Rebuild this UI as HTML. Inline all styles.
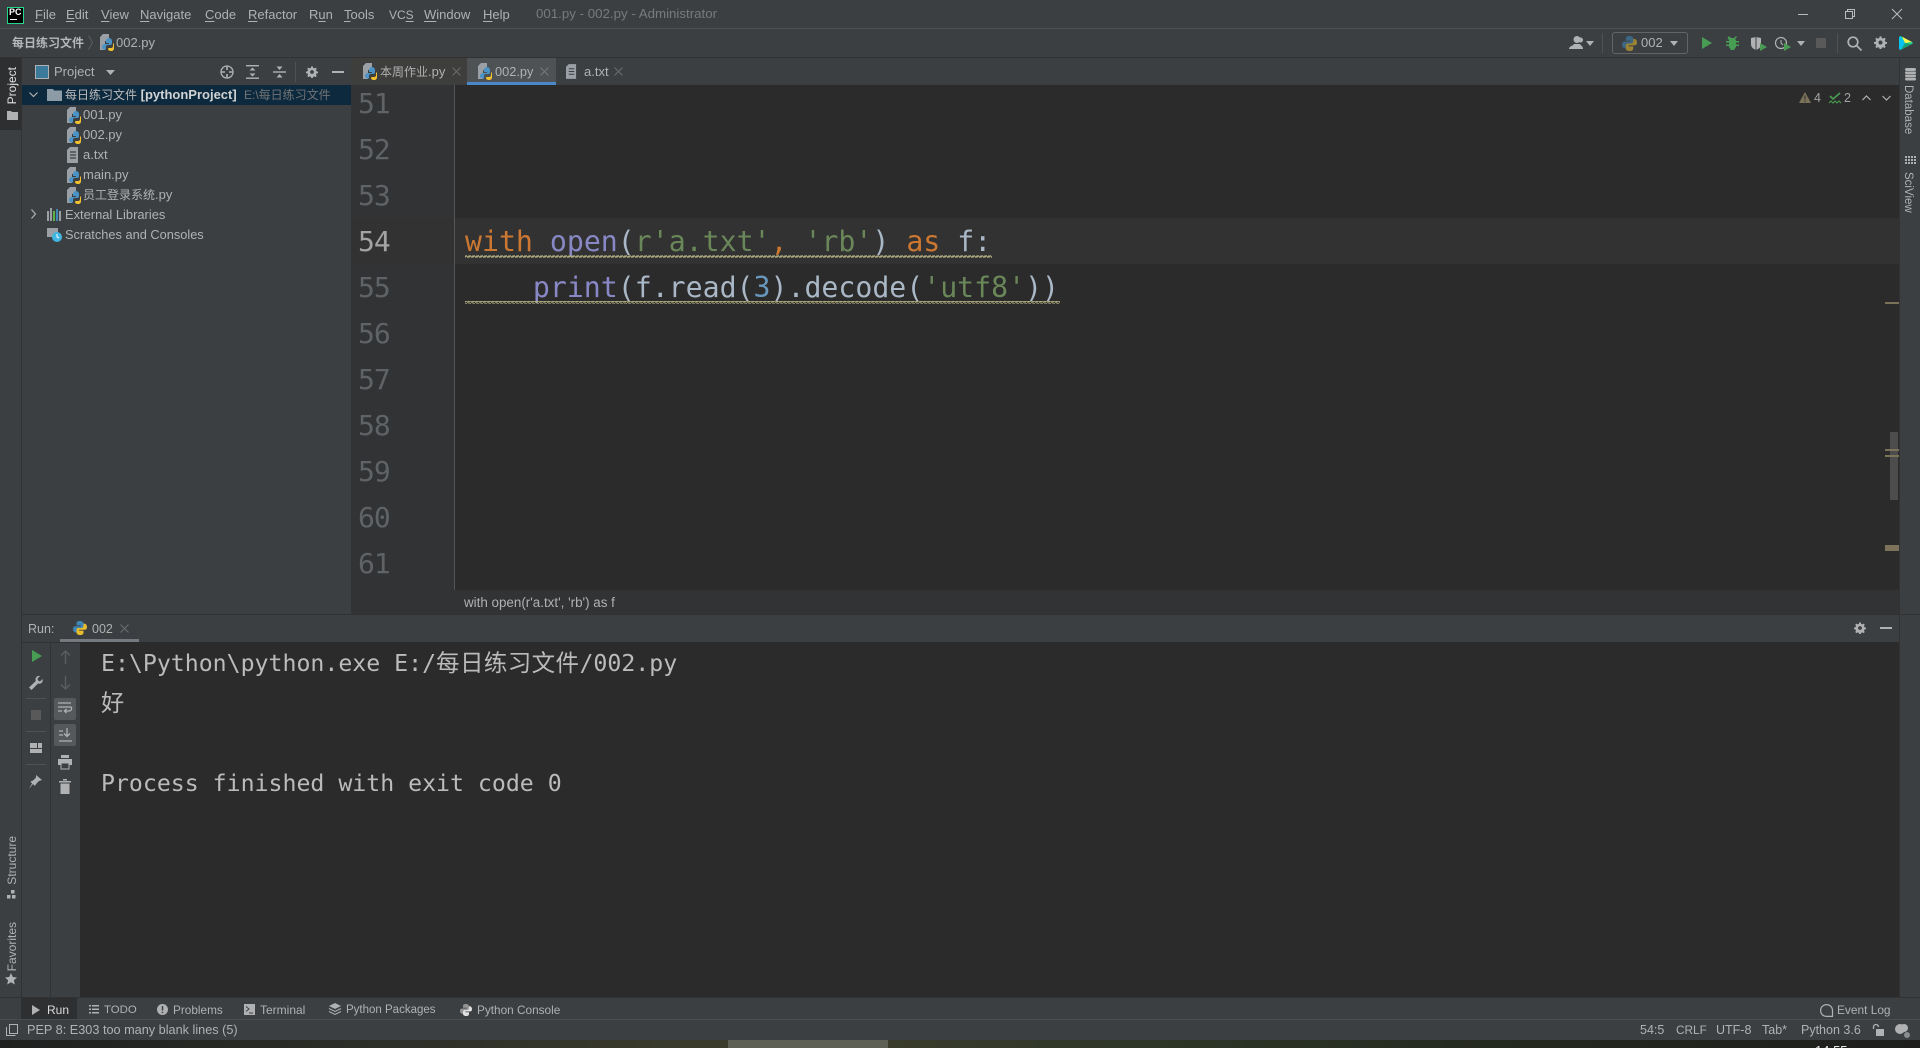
<!DOCTYPE html>
<html><head><meta charset="utf-8"><style>
html,body{margin:0;padding:0;width:1920px;height:1048px;overflow:hidden;background:#3c3f41}
body{position:relative;font:13px/20px "Liberation Sans","Noto Sans CJK SC",sans-serif;color:#afb1b3}
.b{position:absolute}
.t{position:absolute;white-space:nowrap;line-height:20px;font-size:13px;color:#afb1b3}
.c{font-size:12px}
.v{position:absolute;writing-mode:vertical-rl;white-space:nowrap;font-size:12px;line-height:14px;color:#afb1b3}
.l{transform:rotate(180deg)}
u{text-decoration:underline;text-underline-offset:2px}
.ln{position:absolute;left:358px;font:28px/46px "DejaVu Sans Mono",monospace;color:#606366;letter-spacing:-1px}
.code{position:absolute;left:465px;white-space:pre;font:28.2px/46px "DejaVu Sans Mono",monospace;color:#a9b7c6}
.k{color:#cc7832}.f{color:#8888c6}.s{color:#6a8759}.n{color:#6897bb}
.con{position:absolute;left:101px;white-space:pre;font:23.2px/40px "DejaVu Sans Mono","Noto Sans CJK SC",monospace;color:#bbbbbb}
svg.i{position:absolute;overflow:visible}
</style></head><body>
<svg width="0" height="0" style="position:absolute"><defs>
<symbol id="pyf" viewBox="0 0 14 17"><path d="M0 3l3-3h6v7H5v9H0z" fill="#9aa0a5"/><path d="M9 4a3 3 0 0 0-3 3v2h3v1H5a3 3 0 0 0-3 3 3 3 0 0 0 2 2.500h2v-2.500a2 2 0 0 1 2-2h2a2 2 0 0 0 2-2V7a3 3 0 0 0-3-3z" fill="#4a93c4"/><path d="M13 9v3a2 2 0 0 1-2 2H9a1 1 0 0 0-1 1v0c0 1 1 2 3 2s3-1 3-3v-3a2 2 0 0 0-1-2z" fill="#f2c12e"/></symbol>
<symbol id="py" viewBox="0 0 16 16"><path d="M8 0C5 0 4 1 4 3v2h5v1H3C1 6 0 7 0 9s1 4 3 4h1v-2c0-2 1-3 3-3h3c1 0 2-1 2-2V3c0-2-2-3-4-3z" fill="#3f86b8"/><path d="M8 16c3 0 4-1 4-3v-2H7v-1h6c2 0 3-1 3-3s-1-4-3-4h-1v2c0 2-1 3-3 3H6c-1 0-2 1-2 2v3c0 2 2 3 4 3z" fill="#e9bc2e"/></symbol>
<symbol id="txt" viewBox="0 0 12 16"><path d="M0 3l3-3h8v16H0z" fill="#9aa0a5"/><path d="M3 5h6M3 8h6M3 11h6" stroke="#3c3f41" stroke-width="1.200"/></symbol>
<symbol id="gear" viewBox="0 0 16 16"><path d="M7 .5h2l.5 2 1.600.7 1.800-1 1.400 1.400-1 1.800.7 1.600 2 .5v2l-2 .5-.7 1.600 1 1.800-1.400 1.400-1.800-1-1.600.7-.5 2H7l-.5-2-1.600-.7-1.800 1-1.400-1.400 1-1.800-.7-1.600-2-.5v-2l2-.5.7-1.600-1-1.800 1.400-1.400 1.800 1 1.600-.7zM8 5.500a2.500 2.500 0 1 0 0 5 2.500 2.500 0 0 0 0-5z" fill="#afb1b3" fill-rule="evenodd"/></symbol>
<linearGradient id="tb" x1="0" y1="0" x2="1" y2="1"><stop offset="0" stop-color="#fcf84a"/><stop offset=".5" stop-color="#3ddc84"/><stop offset="1" stop-color="#21d789"/></linearGradient>
</defs></svg>

<!-- main bars -->
<div class="b" style="left:0;top:28px;width:1920px;height:1px;background:#515151"></div>
<div class="b" style="left:0;top:57px;width:1920px;height:1px;background:#323232"></div>

<!-- logo -->
<div class="b" style="left:7px;top:7px;width:15px;height:15px;background:#000;border:1px solid #21d789"></div>
<div class="t" style="left:9px;top:5px;color:#fff;font-size:9px;font-weight:bold;line-height:14px">PC</div>
<div class="b" style="left:10px;top:19px;width:7px;height:1px;background:#fff"></div>

<!-- menu -->
<div class="t" style="left:35px;top:5px"><u>F</u>ile</div>
<div class="t" style="left:66px;top:5px"><u>E</u>dit</div>
<div class="t" style="left:101px;top:5px"><u>V</u>iew</div>
<div class="t" style="left:140px;top:5px"><u>N</u>avigate</div>
<div class="t" style="left:205px;top:5px"><u>C</u>ode</div>
<div class="t" style="left:248px;top:5px"><u>R</u>efactor</div>
<div class="t" style="left:309px;top:5px">R<u>u</u>n</div>
<div class="t" style="left:344px;top:5px"><u>T</u>ools</div>
<div class="t" style="left:389px;top:5px;font-size:12px">VC<u>S</u></div>
<div class="t" style="left:424px;top:5px"><u>W</u>indow</div>
<div class="t" style="left:483px;top:5px"><u>H</u>elp</div>
<div class="t" style="left:536px;top:4px;color:#787b7d;font-size:13.300px">001.py - 002.py - Administrator</div>

<!-- window buttons -->
<div class="b" style="left:1798px;top:14px;width:10px;height:1px;background:#bbb"></div>
<svg class="i" style="left:1845px;top:9px" width="10" height="10" fill="none" stroke="#bbb"><rect x=".5" y="2.500" width="7" height="7"/><path d="M2.500 2.500V.5h7v7h-2"/></svg>
<svg class="i" style="left:1892px;top:9px" width="10" height="10" fill="none" stroke="#bbb"><path d="M0 0l10 10M10 0L0 10"/></svg>

<!-- nav bar -->
<div class="t c" style="left:12px;top:33px;font-weight:bold;color:#b5b7b9">每日练习文件</div>
<svg class="i" style="left:88px;top:35px" width="6" height="16" fill="none" stroke="#5a5d5f"><path d="M.5 .5l4 7-4 7"/></svg>
<svg class="i" style="left:100px;top:34px" width="14" height="17"><use href="#pyf"/></svg>
<div class="t" style="left:116px;top:33px">002.py</div>

<!-- top-right toolbar -->
<svg class="i" style="left:1569px;top:36px" width="14" height="13" fill="#afb1b3"><circle cx="8" cy="3.500" r="3.500"/><circle cx="11.500" cy="4" r="2.500"/><path d="M0 13c0-3 4-3 5-5h6c1 2 3 2 3 5z"/></svg>
<svg class="i" style="left:1586px;top:41px" width="8" height="5" fill="#afb1b3"><path d="M0 0h8L4 5z"/></svg>
<div class="b" style="left:1602px;top:33px;width:1px;height:20px;background:#515151"></div>
<div class="b" style="left:1612px;top:32px;width:74px;height:20px;border:1px solid #646464;border-radius:3px"></div>
<svg class="i" style="left:1622px;top:36px;opacity:.55" width="15" height="15"><use href="#py"/></svg>
<div class="t" style="left:1641px;top:33px;font-size:13px">002</div>
<svg class="i" style="left:1670px;top:41px" width="8" height="5" fill="#afb1b3"><path d="M0 0h8L4 5z"/></svg>
<svg class="i" style="left:1702px;top:37px" width="10" height="12" fill="#499c54"><path d="M0 0l10 6-10 6z"/></svg>
<svg class="i" style="left:1726px;top:36px" width="13" height="14" fill="#499c54"><path d="M3 0l2 2h3l2-2 1 1-2 2 1 1v1h3v1.500h-3v2h3V10h-3v1l-2 3H5l-2-3v-1H0V8.500h3v-2H0V5h3V4L1.500 2z"/></svg>
<svg class="i" style="left:1751px;top:37px" width="16" height="14"><path d="M0 1l5-1 5 1v6c0 4-3 5-5 6-2-1-5-2-5-6z" fill="#afb1b3"/><path d="M5 0v13" stroke="#3c3f41"/><path d="M9 6l7 4-7 4z" fill="#499c54"/></svg>
<svg class="i" style="left:1775px;top:37px" width="16" height="14"><circle cx="6" cy="6" r="5.500" fill="none" stroke="#afb1b3" stroke-width="1.200"/><path d="M6 3v3l2 2" stroke="#afb1b3" fill="none"/><path d="M9 6l7 4-7 4z" fill="#499c54"/></svg>
<svg class="i" style="left:1797px;top:41px" width="8" height="5" fill="#afb1b3"><path d="M0 0h8L4 5z"/></svg>
<div class="b" style="left:1816px;top:38px;width:10px;height:10px;background:#595959"></div>
<div class="b" style="left:1837px;top:33px;width:1px;height:20px;background:#515151"></div>
<svg class="i" style="left:1847px;top:36px" width="15" height="15" fill="none" stroke="#afb1b3" stroke-width="1.700"><circle cx="6" cy="6" r="4.800"/><path d="M9.500 9.500l5 5"/></svg>
<svg class="i" style="left:1874px;top:36px" width="13" height="13" viewBox="0 0 16 16"><use href="#gear"/></svg>
<svg class="i" style="left:1899px;top:36px" width="14" height="14"><path d="M0 2Q0 0 2 0.300L13 6Q14.500 7 13 8L2 13.700Q0 14 0 12z" fill="#21d789"/><path d="M3 .8L13 6 6 7z" fill="#fcf84a"/><path d="M0 2Q0 .2 2 .3L6 7 2 13.700Q0 14 0 12z" fill="#07c3f2"/><path d="M2 13.700L6 7 13 8z" fill="#19a07a"/></svg>

<!-- left stripe -->
<div class="b" style="left:0;top:58px;width:21px;height:72px;background:#2d2f30"></div>
<div class="b" style="left:21px;top:58px;width:1px;height:939px;background:#323232"></div>
<div class="v l" style="left:5px;top:67px;color:#e0e0e0">Project</div>
<svg class="i" style="left:7px;top:111px" width="11" height="9" fill="#afb1b3"><path d="M0 0h4l1 1h6v8H0z"/></svg>
<div class="v l" style="left:5px;top:836px">Structure</div>
<svg class="i" style="left:7px;top:890px" width="9" height="9" fill="#afb1b3"><rect x="3" width="3.500" height="3.500" transform="translate(1 0)"/><rect y="5" width="3.500" height="3.500"/><rect x="5" y="5" width="3.500" height="3.500"/></svg>
<div class="v l" style="left:5px;top:922px">Favorites</div>
<svg class="i" style="left:5px;top:973px" width="12" height="12" fill="#afb1b3"><path d="M6 0l1.800 4 4.200.5-3.100 2.800.9 4.200L6 9.300 2.200 11.500l.9-4.200L0 4.500 4.200 4z"/></svg>

<!-- project header -->
<svg class="i" style="left:35px;top:65px" width="14" height="14"><rect x=".5" y=".5" width="13" height="13" fill="#3c7a9c" stroke="#afb1b3"/></svg>
<div class="t" style="left:54px;top:62px">Project</div>
<svg class="i" style="left:106px;top:70px" width="9" height="5" fill="#afb1b3"><path d="M0 0h9L4.500 5z"/></svg>
<svg class="i" style="left:220px;top:65px" width="14" height="14" fill="none" stroke="#afb1b3" stroke-width="1.300"><circle cx="7" cy="7" r="6"/><path d="M7 1v4M7 9v4M1 7h4M9 7h4" stroke-width="1.600"/></svg>
<svg class="i" style="left:246px;top:65px" width="13" height="14" fill="#afb1b3"><rect width="13" height="1.400"/><rect y="12.500" width="13" height="1.400"/><path d="M6.500 2.500l3 3h-6zM6.500 11.500l3-3h-6z"/></svg>
<svg class="i" style="left:273px;top:65px" width="13" height="14" fill="#afb1b3"><rect y="6.300" width="13" height="1.400"/><path d="M6.500 5l3-3.500h-6zM6.500 9l3 3.500h-6z"/></svg>
<div class="b" style="left:295px;top:62px;width:1px;height:20px;background:#515151"></div>
<svg class="i" style="left:306px;top:66px" width="12" height="12" viewBox="0 0 16 16"><use href="#gear"/></svg>
<div class="b" style="left:332px;top:71px;width:12px;height:1.500px;background:#afb1b3"></div>

<!-- tabs -->
<div class="b" style="left:351px;top:58px;width:116px;height:26px;background:#3e3e3c"></div>
<div class="b" style="left:467px;top:58px;width:89px;height:24px;background:#4e5254"></div>
<div class="b" style="left:467px;top:82px;width:89px;height:3px;background:#4a88c7"></div>
<svg class="i" style="left:363px;top:63px" width="14" height="17"><use href="#pyf"/></svg>
<div class="t" style="left:380px;top:62px"><span class="c">本周作业</span>.py</div>
<svg class="i" style="left:478px;top:63px" width="14" height="17"><use href="#pyf"/></svg>
<div class="t" style="left:495px;top:62px;font-size:12.800px">002.py</div>
<svg class="i" style="left:540px;top:67px" width="9" height="9" stroke="#77797b" fill="none"><path d="M.5 .5l8 8M8.500 .5l-8 8"/></svg>
<svg class="i" style="left:566px;top:64px" width="11" height="15"><use href="#txt"/></svg>
<div class="t" style="left:584px;top:62px">a.txt</div>
<svg class="i" style="left:614px;top:67px" width="9" height="9" stroke="#6a6c6e" fill="none"><path d="M.5 .5l8 8M8.500 .5l-8 8"/></svg>
<svg class="i" style="left:452px;top:67px" width="9" height="9" stroke="#6a6c6e" fill="none"><path d="M.5 .5l8 8M8.500 .5l-8 8"/></svg>

<!-- tree -->
<div class="b" style="left:22px;top:85px;width:329px;height:20px;background:#0d293e"></div>
<svg class="i" style="left:29px;top:92px" width="9" height="6" fill="none" stroke="#afb1b3" stroke-width="1.200"><path d="M.5 .5l4 4 4-4"/></svg>
<svg class="i" style="left:47px;top:89px" width="15" height="12" fill="#8c9ba6"><path d="M0 0h6l1 1.500h8V12H0z"/></svg>
<div class="t" style="left:65px;top:85px;color:#bbb"><span class="c">每日练习文件</span> <b style="font-size:13px;color:#d0d2d4">[pythonProject]</b></div>
<div class="t c" style="left:244px;top:85px;color:#717375">E:\每日练习文件</div>
<svg class="i" style="left:67px;top:107px" width="14" height="17"><use href="#pyf"/></svg>
<div class="t" style="left:83px;top:105px">001.py</div>
<svg class="i" style="left:67px;top:127px" width="14" height="17"><use href="#pyf"/></svg>
<div class="t" style="left:83px;top:125px">002.py</div>
<svg class="i" style="left:67px;top:147px" width="12" height="16"><use href="#txt"/></svg>
<div class="t" style="left:83px;top:145px">a.txt</div>
<svg class="i" style="left:67px;top:167px" width="14" height="17"><use href="#pyf"/></svg>
<div class="t" style="left:83px;top:165px">main.py</div>
<svg class="i" style="left:67px;top:187px" width="14" height="17"><use href="#pyf"/></svg>
<div class="t" style="left:83px;top:185px"><span class="c">员工登录系统</span>.py</div>
<svg class="i" style="left:31px;top:209px" width="6" height="10" fill="none" stroke="#afb1b3" stroke-width="1.200"><path d="M.5 .5l4 4.500-4 4.500"/></svg>
<svg class="i" style="left:47px;top:208px" width="14" height="13"><path d="M1 3v10M4 0v13" stroke="#9aa0a5" stroke-width="2"/><path d="M7 3v10" stroke="#62b543" stroke-width="2"/><path d="M10 1v12" stroke="#3f86b8" stroke-width="2"/><path d="M13 3v10" stroke="#9aa0a5" stroke-width="2"/></svg>
<div class="t" style="left:65px;top:205px;font-size:12.900px">External Libraries</div>
<svg class="i" style="left:47px;top:228px" width="15" height="14"><path d="M0 0h11v9H0z" fill="#9aa0a5"/><circle cx="10" cy="9" r="5" fill="#40b6e0"/><path d="M10 6v3l2 1" stroke="#fff" fill="none"/></svg>
<div class="t" style="left:65px;top:225px;font-size:12.800px">Scratches and Consoles</div>

<!-- editor -->
<div class="b" style="left:351px;top:85px;width:103px;height:505px;background:#313335"></div>
<div class="b" style="left:454px;top:85px;width:1445px;height:505px;background:#2b2b2b;overflow:hidden"></div>
<div class="b" style="left:454px;top:85px;width:1px;height:505px;background:#555"></div>
<div class="b" style="left:455px;top:218px;width:1444px;height:46px;background:#323232"></div>
<div class="b" style="left:351px;top:218px;width:103px;height:46px;background:#323232"></div>
<div class="ln" style="top:81px">51</div>
<div class="ln" style="top:127px">52</div>
<div class="ln" style="top:173px">53</div>
<div class="ln" style="top:219px;color:#a4a3a3">54</div>
<div class="ln" style="top:265px">55</div>
<div class="ln" style="top:311px">56</div>
<div class="ln" style="top:357px">57</div>
<div class="ln" style="top:403px">58</div>
<div class="ln" style="top:449px">59</div>
<div class="ln" style="top:495px">60</div>
<div class="ln" style="top:541px">61</div>
<div class="code" style="top:219px"><span class="k">with</span> <span class="f">open</span>(<span class="s">r'a.txt'</span><span class="k">,</span> <span class="s">'rb'</span>) <span class="k">as</span> f:</div>
<div class="code" style="top:265px">    <span class="f">print</span>(f.read(<span class="n">3</span>).decode(<span class="s">'utf8'</span>))</div>
<svg class="i" style="left:465px;top:255px" width="595" height="50">
<defs><pattern id="sq" width="4" height="3" patternUnits="userSpaceOnUse"><path d="M0 2.500L1 .5 3 2.500 4 .5" fill="none" stroke="#b5b283" stroke-width="1"/></pattern></defs>
<rect width="527" height="3" fill="url(#sq)"/><rect y="46" width="595" height="3" fill="url(#sq)"/></svg>

<!-- inspection widget -->
<svg class="i" style="left:1799px;top:92px" width="12" height="11"><path d="M6 0l6 11H0z" fill="#7b7259"/><path d="M6 3.500v4M6 8.500v1.500" stroke="#2b2b2b"/></svg>
<div class="t" style="left:1814px;top:88px;color:#a0a3a5;font-size:12.500px">4</div>
<svg class="i" style="left:1829px;top:92px" width="12" height="13" fill="none" stroke="#499c54" stroke-width="1.600"><path d="M1 4l3 3 7-6"/><path d="M0 11l2-2 2 2 2-2 2 2 2-2 2 2" stroke-width="1"/></svg>
<div class="t" style="left:1844px;top:88px;color:#a0a3a5;font-size:12.500px">2</div>
<svg class="i" style="left:1862px;top:95px" width="9" height="6" fill="none" stroke="#afb1b3" stroke-width="1.200"><path d="M.5 5l4-4 4 4"/></svg>
<svg class="i" style="left:1882px;top:95px" width="9" height="6" fill="none" stroke="#afb1b3" stroke-width="1.200"><path d="M.5 1l4 4 4-4"/></svg>

<!-- right scroll markers -->
<div class="b" style="left:1890px;top:432px;width:8px;height:68px;background:#4d4d4d"></div>
<div class="b" style="left:1885px;top:302px;width:14px;height:2px;background:#7b7259"></div>
<div class="b" style="left:1885px;top:449px;width:14px;height:2px;background:#7b7259"></div>
<div class="b" style="left:1885px;top:455px;width:14px;height:2px;background:#7b7259"></div>
<div class="b" style="left:1885px;top:545px;width:14px;height:6px;background:#7b7259"></div>

<!-- right stripe -->
<div class="b" style="left:1899px;top:58px;width:1px;height:939px;background:#323232"></div>
<svg class="i" style="left:1905px;top:68px" width="11" height="13" fill="#afb1b3"><rect width="11" height="3" rx="1.500"/><rect y="3.500" width="11" height="2.500" rx="1"/><rect y="6.500" width="11" height="2.500" rx="1"/><rect y="9.500" width="11" height="3" rx="1.500"/></svg>
<div class="v" style="left:1901px;top:85px;font-size:11.500px">Database</div>
<svg class="i" style="left:1905px;top:156px" width="11" height="9" fill="#afb1b3"><path d="M0 0h2v2H0zM3 0h2v2H3zM6 0h2v2H6zM9 0h2v2H9zM0 3h2v2H0zM3 3h2v2H3zM6 3h2v2H6zM9 3h2v2H9zM0 6h2v2H0zM3 6h2v2H3zM6 6h2v2H6zM9 6h2v2H9z"/></svg>
<div class="v" style="left:1901px;top:172px;font-size:11.500px">SciView</div>

<!-- breadcrumbs -->
<div class="b" style="left:351px;top:590px;width:1548px;height:24px;background:#313335"></div>
<div class="t" style="left:464px;top:593px;font-size:13.400px">with open(r'a.txt', 'rb') as f</div>

<!-- run panel -->
<div class="b" style="left:22px;top:614px;width:1898px;height:1px;background:#323232"></div>
<div class="t" style="left:28px;top:619px;font-size:12.500px">Run:</div>
<svg class="i" style="left:73px;top:621px" width="14" height="14"><use href="#py"/></svg>
<div class="t" style="left:92px;top:619px;font-size:12.500px">002</div>
<svg class="i" style="left:120px;top:624px" width="9" height="9" stroke="#6a6c6e" fill="none"><path d="M.5 .5l8 8M8.500 .5l-8 8"/></svg>
<div class="b" style="left:60px;top:639px;width:79px;height:3px;background:#747a80"></div>
<svg class="i" style="left:1854px;top:622px" width="12" height="12" viewBox="0 0 16 16"><use href="#gear"/></svg>
<div class="b" style="left:1880px;top:627px;width:12px;height:1.500px;background:#afb1b3"></div>

<div class="b" style="left:80px;top:642px;width:1819px;height:355px;background:#2b2b2b"></div>
<div class="b" style="left:50px;top:642px;width:1px;height:355px;background:#323232"></div>
<div class="b" style="left:22px;top:642px;width:58px;height:1px;background:#323232"></div>
<div class="con" style="top:643px">E:\Python\python.exe E:/<span style="font-size:23.500px;letter-spacing:.4px">每日练习文件</span>/002.py</div>
<div class="con" style="top:684px">好</div>
<div class="con" style="top:764px">Process finished with exit code 0</div>

<!-- run icons -->
<svg class="i" style="left:32px;top:650px" width="10" height="12" fill="#499c54"><path d="M0 0l10 6-10 6z"/></svg>
<svg class="i" style="left:29px;top:676px" width="14" height="14" fill="#afb1b3"><path d="M13.500 3L11 5.500 9 4.500 8.500 2.500 11 0C8.500-.5 6.500 1 6.500 3.500c0 .7.100 1.200.3 1.500L0 11.500 2.500 14 9 7.500c3 1 5.500-1.500 4.500-4.500z"/></svg>
<div class="b" style="left:26px;top:698px;width:20px;height:1px;background:#515151"></div>
<div class="b" style="left:31px;top:710px;width:10px;height:10px;background:#595959"></div>
<div class="b" style="left:26px;top:731px;width:20px;height:1px;background:#515151"></div>
<svg class="i" style="left:30px;top:743px" width="12" height="10" fill="#afb1b3"><rect width="7" height="5"/><rect x="8" width="4" height="5"/><rect y="6" width="12" height="4"/></svg>
<div class="b" style="left:26px;top:764px;width:20px;height:1px;background:#515151"></div>
<svg class="i" style="left:29px;top:775px" width="13" height="14" fill="#afb1b3"><path d="M7 0l6 5-3 1-3 3-1 2-2-2-4 5 3-5.500L1.500 6.500l2.500-1 3-3z"/></svg>

<svg class="i" style="left:60px;top:650px" width="11" height="14" fill="none" stroke="#5a5d5f" stroke-width="1.400"><path d="M5.500 14V1M1 5.500L5.500 1 10 5.500"/></svg>
<svg class="i" style="left:60px;top:676px" width="11" height="14" fill="none" stroke="#5a5d5f" stroke-width="1.400"><path d="M5.500 0v13M1 8.500L5.500 13 10 8.500"/></svg>
<div class="b" style="left:54px;top:698px;width:22px;height:22px;border-radius:2px;background:#55595b"></div>
<svg class="i" style="left:58px;top:702px" width="14" height="14" fill="none" stroke="#afb1b3" stroke-width="1.300"><path d="M0 1h13M0 5h13c1 0 1 4-2 4H7M8.500 7L6.500 9l2 2M0 9h4M0 13h0"/></svg>
<div class="b" style="left:54px;top:724px;width:22px;height:22px;border-radius:2px;background:#55595b"></div>
<svg class="i" style="left:59px;top:728px" width="14" height="14" fill="none" stroke="#afb1b3" stroke-width="1.300"><path d="M0 3h4M0 7h4M0 13h13M8 0v8M5 5.500l3 3 3-3"/></svg>
<svg class="i" style="left:58px;top:755px" width="14" height="14" fill="#afb1b3"><rect x="3" width="8" height="3"/><rect y="4" width="14" height="6"/><rect x="3" y="8" width="8" height="6" fill="#3c3f41" stroke="#afb1b3"/></svg>
<svg class="i" style="left:59px;top:779px" width="12" height="15" fill="#afb1b3"><rect x="4" width="4" height="1.500"/><rect y="2" width="12" height="1.500"/><path d="M1.500 4.500h9V15h-9z"/></svg>

<!-- tool strip -->
<div class="b" style="left:0;top:997px;width:1920px;height:1px;background:#323232"></div>
<div class="b" style="left:21px;top:998px;width:56px;height:21px;background:#2d2f30"></div>
<div class="b" style="left:0;top:1019px;width:1920px;height:1px;background:#4a4c4e"></div>
<svg class="i" style="left:32px;top:1005px" width="8" height="10" fill="#afb1b3"><path d="M0 0l8 5-8 5z"/></svg>
<div class="t" style="left:47px;top:1000px;color:#dcdcdc;font-size:12px">Run</div>
<svg class="i" style="left:89px;top:1005px" width="10" height="9" fill="#afb1b3"><path d="M0 0h2v1.500H0zM3 0h7v1.500H3zM0 3.500h2V5H0zM3 3.500h7V5H3zM0 7h2v1.500H0zM3 7h7v1.500H3z"/></svg>
<div class="t" style="left:104px;top:1000px;font-size:11.400px">TODO</div>
<svg class="i" style="left:157px;top:1004px" width="11" height="11"><circle cx="5.500" cy="5.500" r="5.500" fill="#afb1b3"/><path d="M5.500 2v4.500M5.500 7.800v1.300" stroke="#3c3f41" stroke-width="1.500"/></svg>
<div class="t" style="left:173px;top:1000px;font-size:11.800px">Problems</div>
<svg class="i" style="left:244px;top:1004px" width="11" height="11"><rect width="11" height="11" fill="#afb1b3"/><path d="M2 2.500l3 2.500-3 2.500M5 9h4" stroke="#3c3f41" fill="none"/></svg>
<div class="t" style="left:260px;top:1000px;font-size:12px">Terminal</div>
<svg class="i" style="left:329px;top:1003px" width="12" height="13" fill="#afb1b3"><path d="M6 0l6 3-6 3-6-3z"/><path d="M0 5.500l6 3 6-3M0 8.500l6 3 6-3" fill="none" stroke="#afb1b3"/></svg>
<div class="t" style="left:346px;top:1000px;font-size:11.500px">Python Packages</div>
<svg class="i" style="left:460px;top:1004px;filter:grayscale(1) brightness(1.2)" width="12" height="12"><use href="#py"/></svg>
<div class="t" style="left:477px;top:1000px;font-size:11.800px">Python Console</div>
<svg class="i" style="left:1820px;top:1004px" width="13" height="13" fill="none" stroke="#afb1b3" stroke-width="1.200"><path d="M6.500 .6a5.900 5.900 0 1 0 0 11.800h6V6.500a5.900 5.900 0 0 0-6-5.900z"/></svg>
<div class="t" style="left:1837px;top:1000px;font-size:11.900px">Event Log</div>

<!-- status -->
<svg class="i" style="left:6px;top:1024px" width="12" height="12" fill="none" stroke="#afb1b3"><path d="M3.500 .5h8v9h-8zM.5 3v8.500h9"/></svg>
<div class="t" style="left:27px;top:1020px;font-size:12.700px">PEP 8: E303 too many blank lines (5)</div>
<div class="t" style="left:1640px;top:1020px;font-size:12.500px">54:5</div>
<div class="t" style="left:1676px;top:1020px;font-size:11.800px">CRLF</div>
<div class="t" style="left:1716px;top:1020px;font-size:12.500px">UTF-8</div>
<div class="t" style="left:1762px;top:1020px;font-size:12.500px">Tab*</div>
<div class="t" style="left:1801px;top:1020px;font-size:12.500px">Python 3.6</div>
<svg class="i" style="left:1872px;top:1024px" width="12" height="12"><path d="M1.500 5V3a2.500 2.500 0 0 1 5 0" fill="none" stroke="#afb1b3" stroke-width="1.300"/><rect x="4" y="5" width="8" height="7" fill="#afb1b3"/></svg>
<svg class="i" style="left:1895px;top:1024px" width="16" height="14" fill="#afb1b3"><circle cx="5" cy="5" r="5"/><circle cx="9" cy="4" r="4"/><circle cx="12" cy="11" r="3" fill="#8a8d8f"/></svg>

<!-- desktop strip -->
<div class="b" style="left:0;top:1040px;width:1920px;height:8px;background:linear-gradient(90deg,#1f2120,#2c2e28 20%,#3a3b2b 36%,#3a3b2b 46%,#2d3627 60%,#24281f 80%,#1e1f1d)"></div>
<div class="b" style="left:728px;top:1040px;width:160px;height:8px;background:#5e6055"></div>
<div class="b" style="left:1815px;top:1040px;width:32px;height:8px;overflow:hidden"><div style="position:absolute;top:4px;left:0;font-size:13px;line-height:14px;color:#e8e8e8;white-space:nowrap">14:55</div></div>
</body></html>
